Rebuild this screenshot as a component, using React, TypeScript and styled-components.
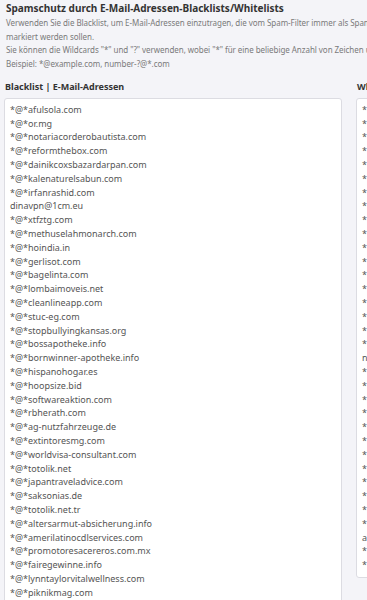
import React, { FC } from 'react'
import styled, { createGlobalStyle } from 'styled-components'

const GlobalStyle = createGlobalStyle`
	html, body {
		margin: 0;
		padding: 0;
		background: #f4f4f8;
		overflow: hidden;
	}

	body {
		font-family: 'Noto Sans', 'Open Sans', sans-serif;
	}
`

const PageUI = styled.div`
	width: 690px;
	padding: 2px 4px 0 4px;
`

const Title = styled.h3`
	margin: 0 0 0 2px;
	font-size: 10px;
	line-height: 13px;
	font-weight: 700;
	color: #333;
`

const Description = styled.p`
	margin: 1px 0 0 2px;
	font-size: 8px;
	line-height: 13.7px;
	letter-spacing: -0.05px;
	color: #7a7a7a;
	white-space: nowrap;
`

const Columns = styled.div`
	display: grid;
	grid-template-columns: 338px 338px;
	gap: 14px;
	margin-top: 9px;
	align-items: start;
`

const Column = styled.div`
	display: flex;
	flex-direction: column;
`

const Label = styled.label`
	margin: 0 0 5px 1px;
	font-size: 9px;
	line-height: 13px;
	font-weight: 700;
	color: #333;
`

const AddressBox = styled.div`
	background: #fff;
	border: 1px solid #dcdce2;
	border-radius: 3px;
	padding: 4px 5px 5px 5px;
	font-size: 9px;
	line-height: 13.8px;
	color: #555;
	white-space: pre;
	overflow: hidden;
`

const blacklist = [
	'*@*afulsola.com',
	'*@*or.mg',
	'*@*notariacorderobautista.com',
	'*@*reformthebox.com',
	'*@*dainikcoxsbazardarpan.com',
	'*@*kalenaturelsabun.com',
	'*@*irfanrashid.com',
	'dinavpn@1cm.eu',
	'*@*xtfztg.com',
	'*@*methuselahmonarch.com',
	'*@*hoindia.in',
	'*@*gerlisot.com',
	'*@*bagelinta.com',
	'*@*lombaimoveis.net',
	'*@*cleanlineapp.com',
	'*@*stuc-eg.com',
	'*@*stopbullyingkansas.org',
	'*@*bossapotheke.info',
	'*@*bornwinner-apotheke.info',
	'*@*hispanohogar.es',
	'*@*hoopsize.bid',
	'*@*softwareaktion.com',
	'*@*rbherath.com',
	'*@*ag-nutzfahrzeuge.de',
	'*@*extintoresmg.com',
	'*@*worldvisa-consultant.com',
	'*@*totolik.net',
	'*@*japantraveladvice.com',
	'*@*saksonias.de',
	'*@*totolik.net.tr',
	'*@*altersarmut-absicherung.info',
	'*@*amerilatinocdlservices.com',
	'*@*promotoresacereros.com.mx',
	'*@*fairegewinne.info',
	'*@*lynntaylorvitalwellness.com',
	'*@*piknikmag.com',
	'*@*schnellkredit24.info',
	'*@*gewinnspiel-center.net',
	'*@*bestpreis-deals.com',
]

const whitelist = [
	'*@*paypal.de',
	'*@*amazon.de',
	'*@*dhl.de',
	'*@*deutschepost.de',
	'*@*sparkasse.de',
	'*@*telekom.de',
	'*@*ebay.de',
	'*@*google.com',
	'*@*microsoft.com',
	'*@*apple.com',
	'*@*github.com',
	'*@*hermes-europe.eu',
	'*@*ups.com',
	'*@*dpd.de',
	'*@*lieferando.de',
	'*@*booking.com',
	'*@*bahn.de',
	'*@*check24.de',
	'newsletter@heise.de',
	'*@*zalando.de',
	'*@*otto.de',
	'*@*ing.de',
	'*@*comdirect.de',
	'*@*elster.de',
	'*@*stadtwerke.de',
	'*@*vodafone.de',
	'*@*o2online.de',
	'*@*mediamarkt.de',
	'*@*idealo.de',
	'*@*tchibo.de',
	'*@*ikea.com',
	'admin@example.com',
	'*@*xing.com',
	'*@*linkedin.com',
]

interface ListProps {
	label: string
	entries: string[]
}

const AddressList: FC<ListProps> = ({ label, entries }): JSX.Element => (
	<Column>
		<Label>{label}</Label>
		<AddressBox>{entries.join('\n')}</AddressBox>
	</Column>
)

const App: FC = (): JSX.Element => {
	return (
		<PageUI>
			<GlobalStyle />
			<Title>Spamschutz durch E-Mail-Adressen-Blacklists/Whitelists</Title>
			<Description>
				Verwenden Sie die Blacklist, um E-Mail-Adressen einzutragen, die vom Spam-Filter immer als Spam markiert werden sollen, und die Whitelist für Adressen, die nie als Spam
				<br />
				markiert werden sollen.
				<br />
				Sie können die Wildcards "*" und "?" verwenden, wobei "*" für eine beliebige Anzahl von Zeichen und "?" für genau ein Zeichen steht.
				<br />
				Beispiel: *@example.com, number-?@*.com
			</Description>
			<Columns>
				<AddressList label='Blacklist | E-Mail-Adressen' entries={blacklist} />
				<AddressList label='Whitelist | E-Mail-Adressen' entries={whitelist} />
			</Columns>
		</PageUI>
	)
}

export default App
